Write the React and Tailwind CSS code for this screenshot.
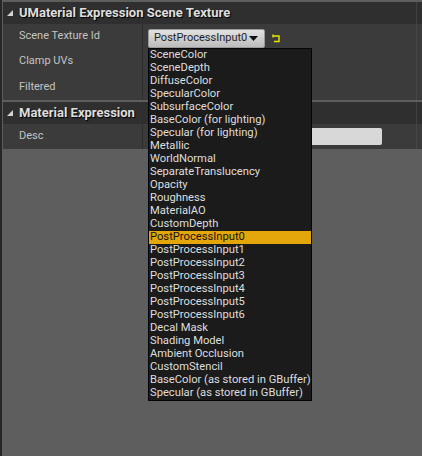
import React from 'react';

const OPTIONS = [
  'SceneColor',
  'SceneDepth',
  'DiffuseColor',
  'SpecularColor',
  'SubsurfaceColor',
  'BaseColor (for lighting)',
  'Specular (for lighting)',
  'Metallic',
  'WorldNormal',
  'SeparateTranslucency',
  'Opacity',
  'Roughness',
  'MaterialAO',
  'CustomDepth',
  'PostProcessInput0',
  'PostProcessInput1',
  'PostProcessInput2',
  'PostProcessInput3',
  'PostProcessInput4',
  'PostProcessInput5',
  'PostProcessInput6',
  'Decal Mask',
  'Shading Model',
  'Ambient Occlusion',
  'CustomStencil',
  'BaseColor (as stored in GBuffer)',
  'Specular (as stored in GBuffer)',
];

// expanded-section marker, the little corner triangle
const Caret = () => (
  <svg width="8" height="8" viewBox="0 0 8 8" className="shrink-0">
    <path d="M7 1 L7 7 L1 7 Z" fill="#d4d4d4" />
  </svg>
);

const ResetIcon = () => (
  <svg width="9" height="9" viewBox="0 0 9 9" className="shrink-0">
    <path d="M1 0.5 V3.5" stroke="#e8e800" strokeWidth="1.4" fill="none" />
    <path d="M1 2 H7 V7.5 H2" stroke="#e8e800" strokeWidth="1.4" fill="none" />
  </svg>
);

const Header = ({ title }) => (
  <div className="flex h-[22px] bg-[#2f2f2f]">
    <div className="flex flex-1 items-center gap-[5px] pl-[3px] border-r border-[#404040]">
      <Caret />
      <span className="text-[13px] font-bold text-[#dedede] [text-shadow:1px_1px_1px_#000]">
        {title}
      </span>
    </div>
    <div className="w-[5px]" />
  </div>
);

const Row = ({ label, children, height = 'h-[25px]' }) => (
  <div className={`flex ${height} bg-[#3b3b3b]`}>
    <div className="flex flex-1 border-r border-[#474747]">
      <div className="flex w-[140px] items-center pl-[16px] border-r border-[#2c2c2c] text-[11px] text-[#c4c4c4]">
        {label}
      </div>
      <div className="flex flex-1 items-center pl-[5px]">{children}</div>
    </div>
    <div className="w-[5px]" />
  </div>
);

const SceneTextureCombo = () => (
  <div className="relative mt-[3px] flex items-center gap-[7px]">
    <div className="flex h-[19px] w-[117px] items-center justify-between rounded-[2px] border border-[#9a9a9a] bg-gradient-to-b from-[#e2e2e2] to-[#bcbcbc] pl-[5px] pr-[6px]">
      <span className="text-[11px] text-[#1e1e1e]">PostProcessInput0</span>
      <svg width="9" height="5" viewBox="0 0 9 5">
        <path d="M0 0 H9 L4.5 5 Z" fill="#111" />
      </svg>
    </div>
    <ResetIcon />
    <div className="absolute left-0 top-[19px] z-10 w-[164px] border border-[#050505] bg-[#1b1b1b]">
      {OPTIONS.map((opt) => (
        <div
          key={opt}
          className={
            opt === 'PostProcessInput0'
              ? 'flex h-[13px] items-center bg-[#e3a60b] pl-[1px] text-[11.2px] text-[#141414] whitespace-nowrap'
              : 'flex h-[13px] items-center pl-[1px] text-[11.2px] text-[#dedede] whitespace-nowrap'
          }
        >
          {opt}
        </div>
      ))}
    </div>
  </div>
);

export default function App() {
  return (
    <div className="flex h-[456px] w-[422px] overflow-hidden bg-[#5e5e5e] font-['Roboto',sans-serif]">
      <div className="w-[2px] bg-[#272727]" />
      <div className="flex-1 pl-[1px] pt-[2px]">
        <Header title="UMaterial Expression Scene Texture" />
        <Row label="Scene Texture Id">
          <SceneTextureCombo />
        </Row>
        <Row label="Clamp UVs" />
        <Row label="Filtered" height="h-[26px]" />

        <div className="h-[2px]" />

        <Header title="Material Expression" />
        <Row label="Desc">
          <div className="h-[17px] w-[234px] rounded-[2px] bg-[#d8d8d8]" />
        </Row>
      </div>
    </div>
  );
}
